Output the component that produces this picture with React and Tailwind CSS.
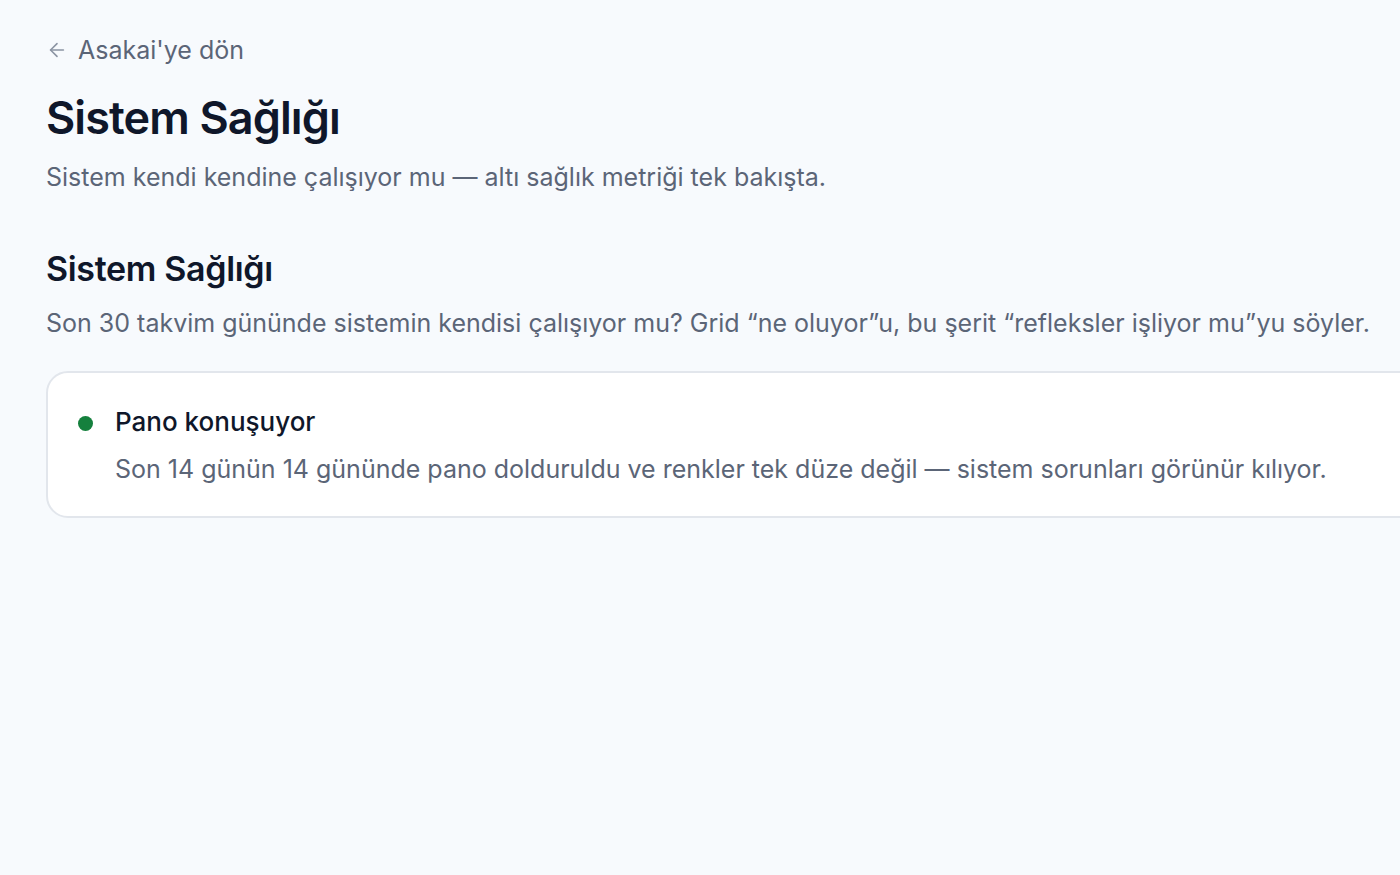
import { ArrowLeft } from 'lucide-react';

function App() {
  return (
    <div className="min-h-screen w-full overflow-hidden bg-[#f7fafd] text-[#0f172a]" style={{ fontFamily: 'Inter, "Noto Sans", sans-serif' }}>
      <div className="pl-[46px] pt-[33px]">
        <a href="#" className="flex items-center gap-[10px] text-[25px] leading-[34px] text-[#5b6577]">
          <ArrowLeft size={22} strokeWidth={1.75} className="text-[#8b94a3]" />
          <span>Asakai'ye dön</span>
        </a>

        <h1 className="mt-[24px] text-[45px] leading-[54px] font-semibold tracking-[-0.02em]">Sistem Sağlığı</h1>
        <p className="mt-[15px] text-[25px] leading-[34px] text-[#5b6577]">
          Sistem kendi kendine çalışıyor mu — altı sağlık metriği tek bakışta.
        </p>

        <h2 className="mt-[54px] text-[34px] leading-[42px] font-semibold tracking-[-0.01em]">Sistem Sağlığı</h2>
        <p className="mt-[16px] text-[25px] leading-[34px] text-[#5b6577] whitespace-nowrap">
          Son 30 takvim gününde sistemin kendisi çalışıyor mu? Grid “ne oluyor”u, bu şerit “refleksler işliyor mu”yu söyler.
        </p>

        <div className="mt-[31px] w-[1400px] rounded-[22px] border-2 border-[#e2e6ec] bg-white pl-[30px] pr-[30px] pt-[29px] pb-[30px]">
          <div className="flex items-start gap-[22px]">
            <span className="mt-[14px] h-[15px] w-[15px] shrink-0 rounded-full bg-[#15803d]" />
            <div>
              <div className="text-[26px] leading-[40px] font-medium">Pano konuşuyor</div>
              <div className="mt-[10px] text-[25px] leading-[34px] text-[#5b6577]">
                Son 14 günün 14 gününde pano dolduruldu ve renkler tek düze değil — sistem sorunları görünür kılıyor.
              </div>
            </div>
          </div>
        </div>
      </div>
    </div>
  );
}

export default App;
